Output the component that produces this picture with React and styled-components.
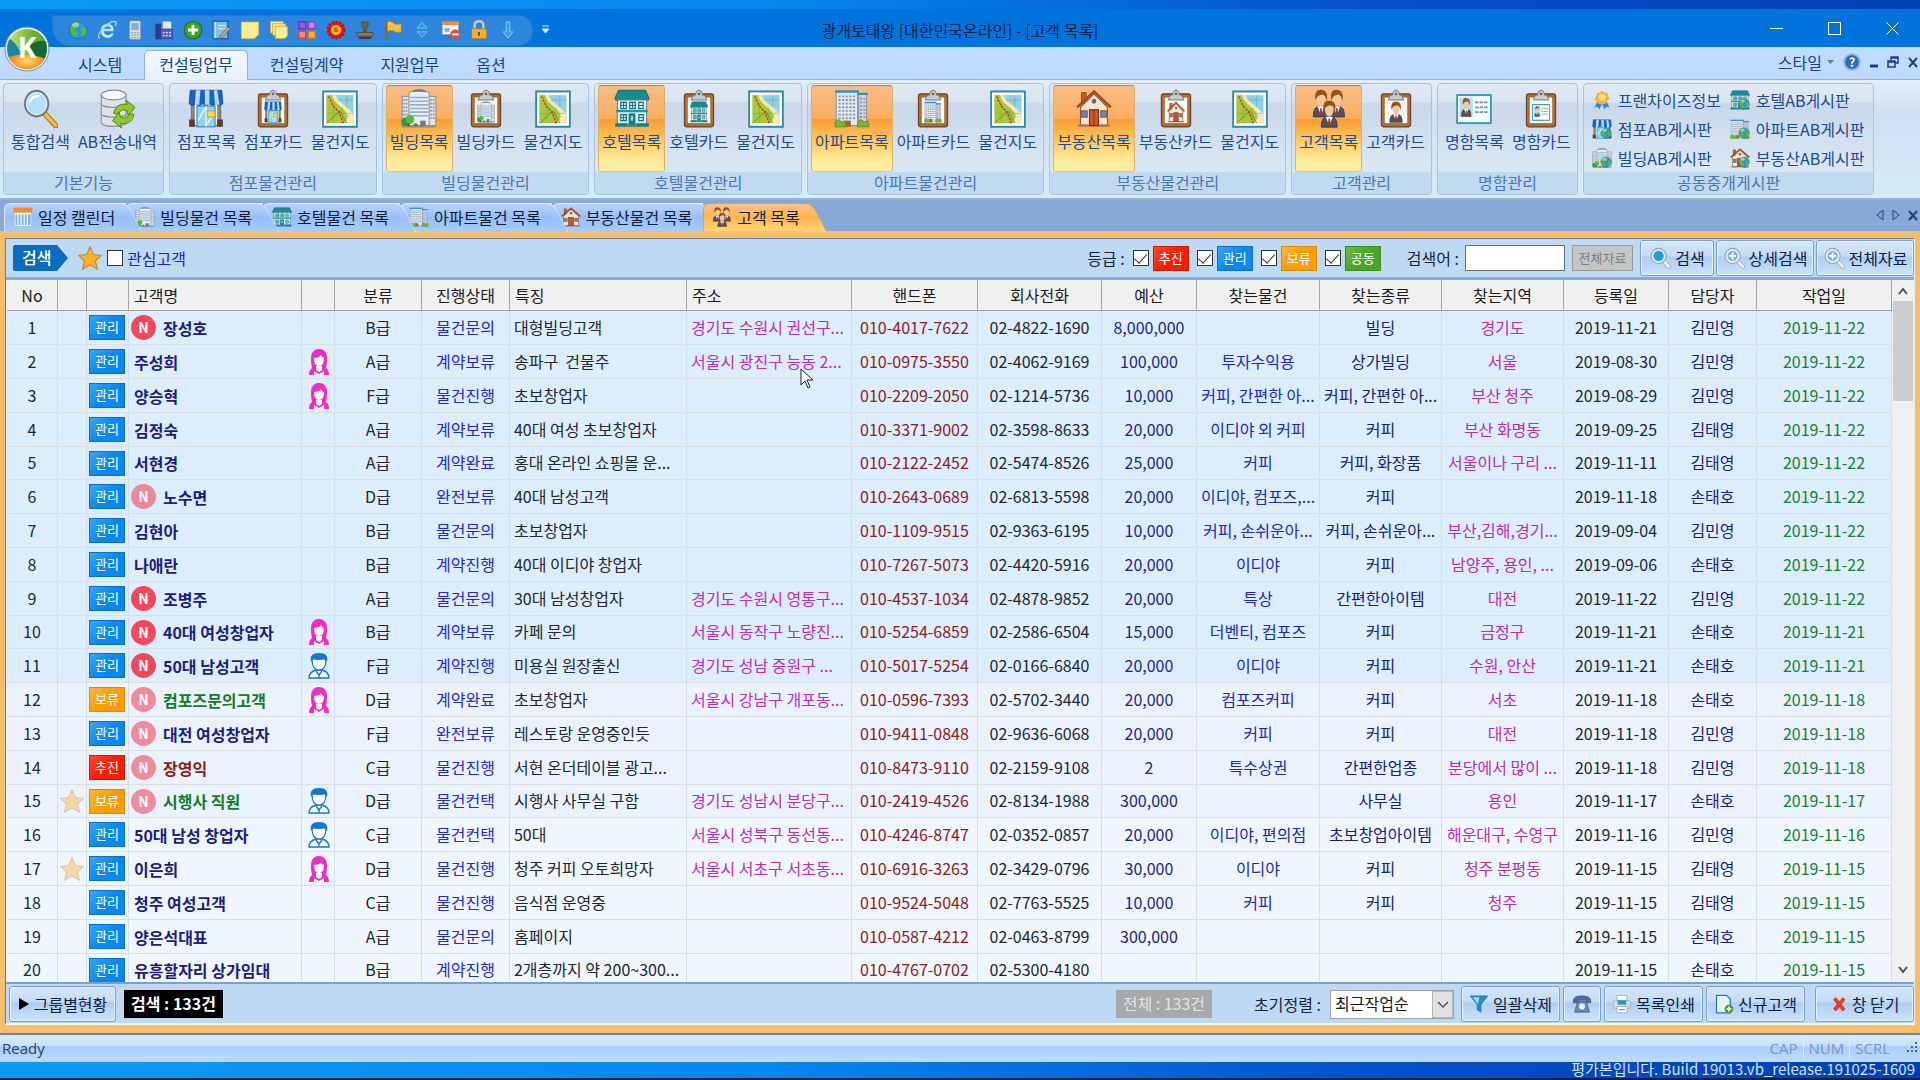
import React from "react";
import styled, { createGlobalStyle, css } from "styled-components";

const GlobalStyle = createGlobalStyle`
    * {
        box-sizing: border-box;
    }
    body {
        margin: 0;
        font-family: "Noto Sans CJK KR", "Noto Sans", sans-serif;
        font-size: 16px;
        line-height: 20px;
        color: #1a1a1a;
    }
    button, input, select {
        font: inherit;
        color: inherit;
        margin: 0;
        padding: 0;
    }
    svg {
        display: block;
        flex: none;
    }
`

const Desktop = styled.div`
    display: flex;
    flex-direction: column;
    height: 100vh;
    padding-top: 9px;
    background: linear-gradient(90deg, #0a9af5 0%, #0787ee 40%, #0350c8 72%, #0340b4 100%);
    overflow: hidden;
`

const AppWindow = styled.div`
    position: relative;
    display: flex;
    flex-direction: column;
    flex: 1;
    min-height: 0;
    background: #bfdbff;
`

/* ---------- title bar ---------- */

const TitleBar = styled.header`
    display: grid;
    grid-template-columns: 1fr auto 1fr;
    align-items: center;
    height: 38px;
    background: #0073dd;
`

const QuickBar = styled.div`
    display: flex;
    align-items: center;
    gap: 8px;
    margin: 4px 0 0 52px;
`

const QuickIcons = styled.div`
    display: flex;
    justify-content: space-between;
    align-items: center;
    width: 481px;
    height: 31px;
    padding: 0 14px 0 15px;
    background: #2e86dc;
    border: 1px solid #2478cc;
    border-radius: 2px 14px 14px 18px;
`

const PlainButton = styled.button`
    display: flex;
    align-items: center;
    justify-content: center;
    background: none;
    border: none;
    cursor: pointer;
`

const WindowTitle = styled.h1`
    margin: 4px 0 0;
    font-size: 16px;
    font-weight: 400;
    line-height: 20px;
    color: #07204a;
`

const WindowButtons = styled.div`
    display: flex;
    justify-content: flex-end;
    gap: 45px;
    margin-right: 21px;
`

const OrbButton = styled.button`
    position: absolute;
    left: 4px;
    top: 17px;
    z-index: 5;
    background: none;
    border: none;
    cursor: pointer;
`

/* ---------- ribbon ---------- */

const MenuRow = styled.nav`
    display: flex;
    justify-content: space-between;
    height: 33px;
    padding: 3px 1px 0 63px;
    background: #bfdbff;
    border-bottom: 1px solid #8db2e3;
`

const MenuTabs = styled.div`
    display: flex;
    gap: 7px;
`

const MenuTab = styled.button`
    height: 30px;
    padding: 0 14px 4px;
    color: #15428b;
    background: none;
    border: 1px solid transparent;
    border-bottom: none;
    border-radius: 5px 5px 0 0;
    cursor: pointer;
    ${p => p.$active && css`
        background: linear-gradient(#f4f9ff, #e6f0fb);
        border-color: #8db2e3;
    `}
`

const MenuRight = styled.div`
    display: flex;
    align-items: center;
    gap: 9px;
    height: 24px;
    color: #15428b;
`

const StyleButton = styled(PlainButton)`
    gap: 5px;
`

const Ribbon = styled.div`
    display: flex;
    gap: 5px;
    height: 120px;
    padding: 3px;
    background: linear-gradient(#e2edf9 0%, #cfe0f4 30%, #d6e8f6 80%, #cff0fb 100%);
    border-bottom: 2px solid #94b4dc;
`

const Group = styled.section`
    display: flex;
    flex-direction: column;
    border: 1px solid #a9c3e2;
    border-radius: 4px;
    background: linear-gradient(#e0e9f4 0%, #d9e4f1 16%, #c9d8ea 18%, #d9e7f5 78%);
    overflow: hidden;
`

const GroupBody = styled.div`
    display: flex;
    flex: 1;
    padding: 1px 2px 0 3px;
`

const GroupCaption = styled.h2`
    flex: none;
    margin: 0;
    height: 22px;
    font-size: 16px;
    font-weight: 400;
    line-height: 20px;
    text-align: center;
    color: #4a76b4;
    background: #c1d9f1;
`

const BigButton = styled.button`
    display: flex;
    flex-direction: column;
    align-items: center;
    gap: 3px;
    height: 87px;
    padding: 3px 3px 0;
    color: #1e4a90;
    background: none;
    border: 1px solid transparent;
    border-radius: 3px;
    white-space: nowrap;
    cursor: pointer;
    ${p => p.$active && css`
        background: linear-gradient(#f8bd86 0%, #fcae60 38%, #fb9a34 39%, #fdc45c 62%, #ffee9e 90%);
        border-color: #b08a58 #e0b060 #f0c860;
    `}
`

const LinkGrid = styled.div`
    display: grid;
    grid-template-columns: auto auto;
    grid-auto-rows: 29px;
    column-gap: 9px;
    padding: 0 7px 0 5px;
`

const SmallButton = styled.button`
    display: flex;
    align-items: center;
    gap: 6px;
    color: #1e4a90;
    background: none;
    border: none;
    white-space: nowrap;
    cursor: pointer;
`

/* ---------- document tabs ---------- */

const TabStrip = styled.div`
    display: flex;
    justify-content: space-between;
    height: 31px;
    padding: 3px 1px 0 4px;
    background: #88a9d6;
`

const Tabs = styled.div`
    display: flex;
`

const DocTab = styled.button`
    position: relative;
    z-index: ${p => p.$z};
    display: flex;
    align-items: center;
    gap: 5px;
    height: 28px;
    padding: 0 11px 2px 8px;
    color: #101c30;
    white-space: nowrap;
    background: ${p => p.$active ? "linear-gradient(#fdc08a, #ffb54c 50%, #ffd478)" : "linear-gradient(#b9d3fa, #98bff8 50%, #a4ccff)"};
    border: 1px solid ${p => p.$active ? "#d8a060" : "#dce9fb"};
    border-width: 1px 0 0 1px;
    border-radius: 6px 0 0 0;
    cursor: pointer;
    &::after {
        content: "";
        position: absolute;
        z-index: -1;
        top: -1px;
        right: -9px;
        width: 24px;
        height: 28px;
        background: inherit;
        border: 1px solid ${p => p.$active ? "#d8a060" : "#dce9fb"};
        border-width: 1px 1px 0 0;
        border-radius: 0 8px 0 0;
        transform: skewX(28deg);
    }
`

const TabTools = styled.div`
    display: flex;
    align-items: center;
    gap: 6px;
    height: 24px;
    color: #1c3f85;
`

/* ---------- customer list ---------- */

const Frame = styled.main`
    display: flex;
    flex-direction: column;
    flex: 1;
    min-height: 0;
    border: 5px solid #f5bd6c;
    border-width: 7px 5px 8px;
`

const Pane = styled.div`
    display: flex;
    flex-direction: column;
    flex: 1;
    min-height: 0;
    border: 1px solid #6e7c8c;
    border-bottom: 2px solid #f2f6fa;
    border-right-color: #e4ecf4;
    background: #bed9f3;
`

const SearchBar = styled.form`
    display: flex;
    justify-content: space-between;
    height: 41px;
    padding-left: 7px;
    border-bottom: 3px solid #86abd8;
`

const Cluster = styled.div`
    display: flex;
    align-items: center;
    gap: ${p => p.$gap}px;
    min-height: 36px;
`

const SearchTag = styled.span`
    width: 55px;
    height: 26px;
    padding-left: 9px;
    line-height: 24px;
    font-weight: 500;
    color: #ffffff;
    background: #0a6cc0;
    border-radius: 2px 0 0 2px;
    clip-path: polygon(0 0, 80% 0, 100% 50%, 80% 100%, 0 100%);
    margin-right: 5px;
`

const CheckLabel = styled.label`
    display: flex;
    align-items: center;
    gap: 4px;
    color: #2222c4;
    cursor: pointer;
`

const CheckBox = styled.input`
    appearance: none;
    display: flex;
    align-items: center;
    justify-content: center;
    width: 16px;
    height: 16px;
    background: #ffffff;
    border: 1px solid #333333;
    &:checked::after {
        content: "";
        width: 6px;
        height: 11px;
        margin-bottom: 3px;
        border: solid #333333;
        border-width: 0 1px 1px 0;
        transform: rotate(42deg);
    }
`

const gradeColors = {
    추진: ["#ff4a30", "#fb1c04", "#c81c08"],
    관리: ["#3ca4f6", "#0a88f0", "#0870c8"],
    보류: ["#ffb636", "#fb9c08", "#d88a10"],
    공동: ["#6cbc48", "#4aa42a", "#3c8c20"],
}

const Badge = styled.span`
    display: block;
    width: 36px;
    height: 25px;
    font-size: 13px;
    line-height: 22px;
    text-align: center;
    color: #ffffff;
    background: linear-gradient(135deg, ${p => gradeColors[p.$grade][0]}, ${p => gradeColors[p.$grade][1]} 50%);
    border: 1px solid ${p => gradeColors[p.$grade][2]};
`

const FieldLabel = styled.label`
    color: #16243c;
    white-space: nowrap;
`

const SearchInput = styled.input`
    width: 100px;
    height: 26px;
    margin: 0 7px 0 6px;
    padding: 0 4px;
    background: #ffffff;
    border: 1px solid #6a7078;
`

const MutedButton = styled.button`
    width: 61px;
    height: 26px;
    font-size: 13px;
    color: #7c7c7c;
    background: #c4c6c8;
    border: 1px solid #96989c;
    margin-right: 5px;
`

const ToolButton = styled.button`
    display: flex;
    align-items: center;
    justify-content: center;
    gap: 4px;
    min-width: ${p => p.$w}px;
    height: 36px;
    color: #10203c;
    white-space: nowrap;
    background: linear-gradient(#d4e6fa 0%, #c4dcf6 45%, #aecdf2 46%, #cbe3fc 100%);
    border: 1px solid #7c9fd0;
    border-radius: 3px;
    box-shadow: inset 0 0 0 1px #e2effd;
    cursor: pointer;
`

const SearchTools = styled(Cluster)`
    align-items: flex-start;
`

const TableArea = styled.div`
    display: flex;
    flex: 1;
    min-height: 0;
    padding-left: 1px;
    background: #e8f0f8;
    border-bottom: 2px solid #7f9fca;
`

const TableClip = styled.div`
    flex: 1;
    min-width: 0;
    overflow: hidden;
`

const Table = styled.table`
    width: 100%;
    table-layout: fixed;
    border-collapse: separate;
    border-spacing: 0;
`

const HeadCell = styled.th`
    height: 31px;
    padding: 0 5px;
    font-weight: 400;
    text-align: ${p => p.$left ? "left" : "center"};
    background: #f0f0f0;
    border-right: 1px solid #a4a4a4;
    border-bottom: 1px solid #a0a0a0;
`

const Row = styled.tr`
    height: 34px;
    background: ${p => p.$bg};
    &:nth-child(5n) {
        height: 33px;
    }
`

const Cell = styled.td`
    padding: ${p => p.$tight ? "0 0 0 2px" : "0 4px 2px"};
    color: ${p => p.$color || "#22262e"};
    font-weight: ${p => p.$bold ? 700 : 400};
    text-align: ${p => p.$left ? "left" : "center"};
    white-space: pre;
    overflow: hidden;
    border-right: 1px solid #d6dde6;
    border-bottom: 1px solid #dcdfe2;
`

const NameBox = styled.div`
    display: flex;
    align-items: center;
    gap: 7px;
    padding-left: ${p => p.$isNew ? 0 : 3}px;
`

const SexBox = styled.div`
    display: flex;
    justify-content: center;
`

const NewMark = styled.span`
    width: 25px;
    height: 25px;
    font-size: 14px;
    font-weight: 700;
    line-height: 24px;
    text-align: center;
    color: #ffffff;
    background: #f4475c;
    border-radius: 50%;
    opacity: ${p => p.$faded ? 0.6 : 1};
`

const FavoriteMark = styled.div`
    opacity: 0.4;
`

const ScrollBar = styled.div`
    display: flex;
    flex-direction: column;
    align-items: center;
    width: 22px;
    padding: 6px 1px 8px;
    background: #f0f0f0;
`

const ScrollThumb = styled.div`
    width: 100%;
    height: 100px;
    margin: 3px 0 auto;
    background: #cdcdcd;
`

const FooterBar = styled.footer`
    display: flex;
    align-items: center;
    justify-content: space-between;
    height: 39px;
    padding: 1px 0 0 3px;
`

const CountBox = styled.output`
    padding: 0 7px;
    height: 28px;
    line-height: 26px;
    font-weight: ${p => p.$muted ? 400 : 700};
    color: ${p => p.$muted ? "#e4e4e4" : "#ffffff"};
    background: ${p => p.$muted ? "#a6a8aa" : "#000000"};
    margin: 0 ${p => p.$muted ? 39 : 0}px 0 ${p => p.$muted ? 0 : 6}px;
    white-space: nowrap;
`

const SelectBox = styled.div`
    display: flex;
    align-items: center;
    position: relative;
    width: 124px;
    height: 29px;
    margin: 0 4px 0 6px;
    background: #ffffff;
    border: 1px solid #9aa4b0;
`

const SortSelect = styled.select`
    appearance: none;
    width: 100%;
    height: 100%;
    padding: 0 24px 2px 4px;
    background: none;
    border: none;
`

const SelectArrow = styled.span`
    position: absolute;
    right: 0;
    display: flex;
    align-items: center;
    justify-content: center;
    width: 21px;
    height: 27px;
    background: #e2e2e2;
    border: 1px solid #b4b8bc;
    pointer-events: none;
`

const CloseGap = styled.span`
    width: 4px;
`

const StatusBar = styled.div`
    display: flex;
    justify-content: space-between;
    align-items: center;
    height: 29px;
    padding: 0 2px 2px;
    font-family: "Open Sans", "Noto Sans CJK KR", sans-serif;
    font-size: 15px;
    color: #24406c;
    background: linear-gradient(#dcebfe 0%, #c6defd 40%, #a9cdfb 45%, #c0dcff 100%);
    border-top: 2px solid #6c84ac;
`

const StatusKeys = styled.div`
    display: flex;
    align-items: center;
    gap: 5px;
    color: #7896c4;
    span {
        padding-right: 5px;
        border-right: 1px solid #dcebfe;
    }
    span:nth-of-type(3) {
        border: none;
        padding-right: 11px;
    }
`

const BuildNote = styled.div`
    height: 18px;
    padding-right: 5px;
    font-size: 15px;
    line-height: 14px;
    text-align: right;
    color: #d4e0f4;
    border-bottom: 2px solid #04204c;
`

const Pointer = styled.svg`
    position: absolute;
    left: 800px;
    top: 359px;
    z-index: 9;
`

/* ---------- drawings, all on a 32 x 32 grid ---------- */

const Svg = ({ w = 20, h = w, children }) => (
    <svg width={w} height={h} viewBox="0 0 32 32" preserveAspectRatio="none" aria-hidden="true">{children}</svg>
)

const Store = () => (
    <g>
        <rect x="3" y="12" width="26" height="18" fill="#e8f2fa" stroke="#5a6a7a" />
        <rect x="3" y="12" width="3" height="19" fill="#8a8078" />
        <rect x="26" y="12" width="3" height="19" fill="#8a8078" />
        <rect x="8" y="14" width="16" height="17" fill="#8ad4f4" stroke="#3a8ac0" />
        <path d="M16 14v17M9 26l6-10M17 29l5-8" stroke="#ffffff" strokeWidth="1" />
        <rect x="17" y="18" width="7" height="5" fill="#ffd83a" stroke="#c89010" strokeWidth=".6" />
        <rect x="1" y="25" width="5" height="6" fill="#5a4028" />
        <rect x="26" y="25" width="5" height="6" fill="#5a4028" />
        <path d="M2 1h28l1 11q-3 3-6 0-3 3-6 0-3 3-6 0-3 3-6 0-3 3-6 0z" fill="#1a62c8" stroke="#0e4090" strokeWidth=".6" />
        <path d="M7 1h4l-1 12H6zM15 1h4v12h-4zM23 1h3l2 12h-4z" fill="#b4dcfa" />
    </g>
)

const Building = () => (
    <g>
        <path d="M1 6h30v24H1z" fill="#dfe3e7" stroke="#7c8690" strokeWidth=".8" />
        <path d="M2 9h4M2 12h4M2 15h4M2 18h4M2 21h4M26 9h4M26 12h4M26 15h4M26 18h4M26 21h4M26 24h4" stroke="#8a949e" strokeWidth="1.4" strokeDasharray="1.5 .7" />
        <path d="M7 4q0-2 3-2h12q3 0 3 2v26H7z" fill="#e6eef4" stroke="#7c8690" strokeWidth=".8" />
        <path d="M10 2q6-2 12 0" fill="none" stroke="#6c7680" strokeWidth="1.4" />
        <path d="M8 7h16M8 10h16M8 13h16M8 16h16M8 19h16M8 22h16" stroke="#8fb0c8" strokeWidth="1.3" />
        <rect x="17" y="26" width="5" height="5" fill="#6c7c8c" />
        <circle cx="4" cy="27" r="3.600" fill="#2f9a34" />
        <circle cx="8" cy="25" r="3.800" fill="#58b840" />
        <path d="M11 29q2-2 4 0v2h-4z" fill="#3c9c34" />
        <rect x="6" y="28" width="1.600" height="3" fill="#7a4a20" />
        <path d="M1 31h30" stroke="#888" />
    </g>
)

const Hotel = () => (
    <g>
        <path d="M4 1h24l3 6v2H1V7z" fill="#168c94" stroke="#0a6068" strokeWidth=".7" />
        <rect x="3" y="9" width="26" height="20" fill="#dfecf0" stroke="#6a8890" />
        <path d="M6 11h5v5H6zM14 11h5v5h-5zM22 11h4v5h-4zM6 21h5v5H6zM22 21h4v5h-4z" fill="#c8f0f2" stroke="#0e7078" />
        <path d="M8.500 11v5M16.500 11v5M8.500 21v5M6 13.500h5M14 13.500h5M22 13.500h4M6 23.500h5M22 23.500h4" stroke="#0e7078" strokeWidth=".8" />
        <path d="M2 17h28v2H2z" fill="#1c98a0" />
        <rect x="13" y="20" width="6" height="10" fill="#1a7c84" />
        <rect x="15" y="22" width="2" height="4" fill="#8cdce0" />
        <path d="M1 28h11v3H1zM20 28h11v3H20zM10 30h12v1H10z" fill="#148088" />
    </g>
)

const Apartment = () => (
    <g>
        <path d="M2 2h19v28H2z" fill="#e2e8f0" stroke="#8090a4" strokeWidth=".8" />
        <path d="M22 4h7v26h-7z" fill="#d0d8e4" stroke="#8090a4" strokeWidth=".8" />
        <path d="M1 1h21v2H1zM21 3h9v2h-9z" fill="#2e90cc" />
        <path d="M4 6h16M4 9h16M4 12h16M4 15h16M4 18h16M4 21h16M4 24h16M23 8h5M23 11h5M23 14h5M23 17h5M23 20h5M23 23h5" stroke="#8c9cb4" strokeWidth="1.5" strokeDasharray="2 1.2" />
        <rect x="10" y="26" width="5" height="5" fill="#a8622c" />
        <path d="M1 31v-4l3-2 3 2 3-1 1 5zM21 31v-4l3-2 3 2 3-1 1 5z" fill="#7cb434" stroke="#3c8414" strokeWidth=".6" />
    </g>
)

const House = () => (
    <g>
        <rect x="5" y="3" width="4" height="9" fill="#c85a2c" stroke="#84340e" strokeWidth=".7" />
        <path d="M4 15L16 4l12 11v15H4z" fill="#f2e6d0" stroke="#8a5a34" />
        <path d="M1 15L16 2l15 13" fill="none" stroke="#a84a20" strokeWidth="2.2" />
        <circle cx="16" cy="10" r="2" fill="#5a6a8a" />
        <rect x="12" y="17" width="8" height="13" fill="#d0582a" stroke="#843010" />
        <path d="M16 17v13" stroke="#843010" strokeWidth=".8" />
        <path d="M5 18h5v5H5zM22 18h5v5h-5z" fill="#5a8ad4" stroke="#8a5a34" />
        <path d="M2 29h9v2H2zM21 29h9v2h-9z" fill="#a87850" />
    </g>
)

const Person = () => (
    <g>
        <path d="M5 31c0-9 3-12 11-12s11 3 11 12z" fill="#4c5460" stroke="#2c323c" />
        <path d="M11 19l5 10 5-10z" fill="#ffffff" />
        <path d="M15 21h2l1 7-2 2-2-2z" fill="#c42828" />
        <ellipse cx="16" cy="11" rx="6" ry="8" fill="#f4c898" />
        <path d="M8 13C6 2 12 0 17 1c7 0 9 6 7 12-1-5-3-6-6-7-4 1-8 1-10 7z" fill="#8c5420" />
    </g>
)

const People = () => (
    <g>
        <g transform="translate(-1 0) scale(.62 .74)"><Person /></g>
        <g transform="translate(13 0) scale(.62 .74)"><Person /></g>
        <g transform="translate(6 9) scale(.64 .72)"><Person /></g>
    </g>
)

const NameCard = () => (
    <g>
        <rect x="1" y="5" width="30" height="23" fill="#f4fbff" stroke="#3a94bc" strokeWidth="1.6" />
        <rect x="3" y="7" width="12" height="16" fill="#b4e0f4" />
        <g transform="translate(3 7) scale(.38 .5)"><Person /></g>
        <path d="M17 11h11M17 15h11M17 19h11" stroke="#7890a0" strokeWidth="1.4" strokeDasharray="3 1" />
    </g>
)

const MapSheet = () => (
    <g>
        <rect x="1" y="2" width="30" height="29" fill="#ffffff" stroke="#2a88a8" strokeWidth="1.6" />
        <rect x="4" y="5" width="24" height="23" fill="#8cd0f4" />
        <path d="M4 5h8c3 8 13 9 16 17v6H4z" fill="#f6e8b4" />
        <path d="M4 5h5c2 9 13 10 14 18l-3 5H4z" fill="#a8c83c" />
        <path d="M22 5v10M14 9h14M10 12v16M4 20h22M18 15v13" stroke="#80a860" strokeWidth=".5" />
        <path d="M4 28l12-10 6 10" fill="none" stroke="#6c9030" strokeWidth=".8" />
        <path d="M6 6l4 8 5 5 4 9" fill="none" stroke="#d03018" strokeWidth="1.2" strokeDasharray="2 1" />
    </g>
)

const Magnifier = () => (
    <g>
        <path d="M20 20l10 10" stroke="#b8761c" strokeWidth="5" strokeLinecap="round" />
        <path d="M21 21l9 9" stroke="#f8b848" strokeWidth="3" strokeLinecap="round" />
        <circle cx="13" cy="12" r="10" fill="#b4e0fc" stroke="#6a7c8c" strokeWidth="2.6" />
        <circle cx="13" cy="12" r="9" fill="none" stroke="#f0f4f8" strokeWidth="1" />
        <path d="M7 11q2-6 8-5" fill="none" stroke="#fff" strokeWidth="2" />
    </g>
)

const Database = () => (
    <g>
        <path d="M2 5v22c0 5 22 5 22 0V5z" fill="#dfe3e7" stroke="#8a9098" />
        <path d="M2 12c0 4 22 4 22 0M2 20c0 4 22 4 22 0" fill="none" stroke="#8a9098" />
        <ellipse cx="13" cy="5" rx="11" ry="4" fill="#f6f8fa" stroke="#8a9098" />
        <path d="M13 20c1-6 7-9 12-7l-1-4 8 6-6 7-1-4c-4-2-7 0-8 3z" fill="#92c42c" stroke="#4c8410" strokeWidth=".8" />
        <path d="M31 21c-1 6-7 9-12 7l1 4-8-6 6-7 1 4c4 2 7 0 8-3z" fill="#92c42c" stroke="#4c8410" strokeWidth=".8" />
    </g>
)

const Clipboard = ({ children }) => (
    <g>
        <rect x="3" y="4" width="26" height="27" rx="2" fill="#a86c34" stroke="#6c4018" />
        <rect x="6" y="7" width="20" height="21" fill="#f6f6f4" />
        <g transform="translate(8 10) scale(.5 .56)">{children}</g>
        <path d="M9 9l2-4h2q0-4 3-4t3 4h2l2 4z" fill="#c8ccd0" stroke="#74787c" strokeWidth=".8" />
        <circle cx="16" cy="4" r="1.2" fill="#6c7074" />
    </g>
)

const Globe = () => (
    <g>
        <circle cx="16" cy="16" r="14" fill="#2c94e8" stroke="#1464ac" />
        <path d="M5 9q5-8 12-6 3 4-1 7-6 0-5 5 5 2 4 8l-3 5Q4 24 3 15zM21 12q7-2 9 4-1 8-7 11-4-5-2-15z" fill="#58b83c" />
        <ellipse cx="12" cy="8" rx="6" ry="4" fill="#fff" opacity=".4" />
    </g>
)

const WithGlobe = ({ children }) => (
    <g>
        {children}
        <g transform="translate(13 13) scale(.6)"><Globe /></g>
    </g>
)

const Medal = () => (
    <g>
        <path d="M9 18L4 28l5-1 3 4 5-11zM23 18l5 10-5-1-3 4-5-11z" fill="#3c84d0" />
        <path d="M16 1l4 3 5 1 1 5 2 4-4 4-2 4-6 1-6-1-3-4-3-4 3-4 1-5 5-1z" fill="#f8b030" />
        <circle cx="16" cy="12" r="6" fill="#ffd878" />
    </g>
)

const Calendar = () => (
    <g>
        <rect x="2" y="2" width="28" height="29" fill="#f4f8fc" stroke="#98acc4" />
        <path d="M1 1h30v8H1z" fill="#f48c28" />
        <path d="M4 12h24v17H4z" fill="#7cb4e4" />
        <path d="M8 11v19M13 11v19M18 11v19M23 11v19" stroke="#f4f8fc" strokeWidth="2" />
    </g>
)

const Star = () => (
    <path d="M16 1l4.500 10.500L31 12.500l-8 7.500 3 11-10-6-10 6 3-11-8-7.500 10.500-1z" fill="#fdb022" stroke="#b88830" strokeWidth="1.400" />
)

const Loupe = ({ plus }) => (
    <g>
        <path d="M20 19l9 10" stroke="#a0a8b0" strokeWidth="6" strokeLinecap="round" />
        <path d="M21 20l8 9" stroke="#eef0f2" strokeWidth="4" strokeLinecap="round" />
        <circle cx="14" cy="13" r="11" fill="#e4eef6" stroke="#98a4b0" strokeWidth="1.6" />
        <circle cx="14" cy="13" r="7.500" fill={plus ? "#7cb8d0" : "#18a0e0"} />
        {plus && <path d="M14 8v10M9 13h10" stroke="#fff" strokeWidth="2.600" />}
    </g>
)

const Orb = () => (
    <svg width="46" height="46" viewBox="0 0 46 46" role="img" aria-label="K">
        <defs>
            <clipPath id="orb"><circle cx="23" cy="23" r="20" /></clipPath>
            <radialGradient id="orbFire" cx=".5" cy=".3" r=".7">
                <stop offset="0" stopColor="#ffe060" />
                <stop offset=".6" stopColor="#f8801c" />
                <stop offset="1" stopColor="#d83c0c" />
            </radialGradient>
            <linearGradient id="orbGreen">
                <stop offset="0" stopColor="#e4ec8c" />
                <stop offset=".6" stopColor="#6cb430" />
                <stop offset="1" stopColor="#4ca02c" />
            </linearGradient>
        </defs>
        <circle cx="23" cy="23" r="22" fill="#e8ecf0" stroke="#7c8ca0" />
        <g clipPath="url(#orb)">
            <rect width="46" height="46" fill="url(#orbGreen)" />
            <path d="M0 10q12 4 17 18L2 38z" fill="#1c84a4" />
            <path d="M24 22q8-10 22-6v18H26z" fill="#146c34" />
            <path d="M2 32q20-8 42 2v16H2z" fill="url(#orbFire)" />
        </g>
        <text x="23" y="32" textAnchor="middle" fontFamily="Open Sans, sans-serif" fontSize="28" fontWeight="700" fill="#ffffff">K</text>
    </svg>
)

const quickIcons = [
    ["웹", <Globe />],
    ["인터넷", (
        <g>
            <path d="M27 18H11q1 6 6 6 4 0 6-3h4q-3 8-10 8Q6 28 6 17T17 6q10 0 10 12zm-5-4q-1-4-5-4t-6 4z" fill="#c8ecff" stroke="#3a9ce0" strokeWidth=".8" />
            <path d="M4 30Q-1 26 10 13 24-1 30 3q2 2-1 7" fill="none" stroke="#9cd8fc" strokeWidth="2" />
        </g>
    )],
    ["휴대폰", (
        <g>
            <rect x="7" y="1" width="18" height="30" rx="3" fill="#d8dce0" stroke="#7c8894" />
            <rect x="10" y="5" width="12" height="11" fill="#7cb4dc" />
            <path d="M10 20h12M10 24h12M10 28h12" stroke="#98a0a8" strokeWidth="2" strokeDasharray="3 1.500" />
        </g>
    )],
    ["팩스", (
        <g>
            <rect x="2" y="6" width="9" height="25" fill="#2c3890" />
            <rect x="11" y="15" width="19" height="15" fill="#5464b4" stroke="#2c3880" />
            <rect x="14" y="2" width="14" height="12" fill="#dce8f8" stroke="#7088b8" />
            <path d="M14 20h13M14 25h13" stroke="#d4dcf4" strokeWidth="2" strokeDasharray="3 2" />
        </g>
    )],
    ["추가", (
        <g>
            <circle cx="16" cy="16" r="14" fill="#3fa428" stroke="#237414" strokeWidth="2" />
            <path d="M16 8v16M8 16h16" stroke="#fff" strokeWidth="4.500" />
        </g>
    )],
    ["메모 작성", (
        <g>
            <rect x="3" y="2" width="24" height="28" fill="#7cc0f0" stroke="#1c5ca4" strokeWidth="2" />
            <path d="M7 3v26M11 9h12M11 14h12" stroke="#e8f4fc" strokeWidth="1.500" />
            <path d="M14 26l13-15 4 3-13 14-5 2z" fill="#c8a878" stroke="#5c4838" />
        </g>
    )],
    ["메모", <path d="M2 3h28v20l-7 7H2z" fill="#fcec90" stroke="#c4a840" />],
    ["메모 목록", (
        <g fill="#fcec90" stroke="#a88c38">
            <path d="M2 2h21v19H2z" />
            <path d="M6 6h21v19H6z" />
            <path d="M10 10h20v15l-5 5H10z" />
        </g>
    )],
    ["분류", (
        <g strokeWidth="2">
            <rect x="3" y="3" width="11" height="11" fill="#9c54e8" stroke="#6c2cc0" />
            <rect x="18" y="3" width="11" height="11" fill="#c880f4" stroke="#8838c8" />
            <rect x="3" y="18" width="11" height="11" fill="#fc8c74" stroke="#e83c30" />
            <rect x="18" y="18" width="11" height="11" fill="#fcb030" stroke="#f07018" />
        </g>
    )],
    ["설정", (
        <g>
            <circle cx="16" cy="16" r="13" fill="#e81c14" stroke="#c80c0c" strokeWidth="4" strokeDasharray="4 2" />
            <circle cx="16" cy="16" r="8" fill="#fcc424" />
            <circle cx="16" cy="16" r="4" fill="#f05c14" />
        </g>
    )],
    ["도장", (
        <g>
            <path d="M11 3h10v6l-3 5v5h-4v-5l-3-5z" fill="#6c6054" stroke="#40382c" />
            <path d="M3 20h26v6H3z" fill="#9c7450" stroke="#4c3420" />
            <path d="M6 27h20v3H6z" fill="#3c3028" />
        </g>
    )],
    ["깃발", (
        <g>
            <path d="M6 2v29" stroke="#8c6414" strokeWidth="3" />
            <path d="M7 3q6-2 10 2t12 1v13q-7 2-11-1t-11 0z" fill="#fcc040" stroke="#c88010" />
        </g>
    )],
    ["정렬", <path d="M8 13l8-9 8 9zM8 19l8 9 8-9z" fill="#3c90dc" stroke="#80c0f0" strokeWidth="1.500" />],
    ["창 제거", (
        <g>
            <rect x="2" y="3" width="26" height="20" fill="#f4f4f4" stroke="#98a0ac" />
            <path d="M2 3h26v5H2z" fill="#f08c38" />
            <path d="M6 13h8v6H6z" fill="#78b4e8" />
            <circle cx="23" cy="23" r="8" fill="#e84c34" />
            <path d="M18 23h10" stroke="#fff" strokeWidth="3" />
        </g>
    )],
    ["잠금", (
        <g>
            <path d="M9 15V9q0-7 7-7t7 7v6" fill="none" stroke="#c0c8d0" strokeWidth="4" />
            <rect x="4" y="14" width="24" height="16" rx="2" fill="#f4b030" stroke="#a87010" />
            <path d="M16 19v6" stroke="#704808" strokeWidth="3" />
        </g>
    )],
    ["내리기", <path d="M13 3h6v16h5l-8 10-8-10h5z" fill="#3c9ce8" stroke="#8cc8f4" strokeWidth="1.500" />],
]

/* ---------- data ---------- */

const ribbonGroups = [
    ["기본기능", [["통합검색", <Magnifier />], ["AB전송내역", <Database />]]],
    ["점포물건관리", [["점포목록", <Store />], ["점포카드", <Clipboard><Store /></Clipboard>], ["물건지도", <MapSheet />]]],
    ["빌딩물건관리", [["빌딩목록", <Building />, true], ["빌딩카드", <Clipboard><Building /></Clipboard>], ["물건지도", <MapSheet />]]],
    ["호텔물건관리", [["호텔목록", <Hotel />, true], ["호텔카드", <Clipboard><Hotel /></Clipboard>], ["물건지도", <MapSheet />]]],
    ["아파트물건관리", [["아파트목록", <Apartment />, true], ["아파트카드", <Clipboard><Apartment /></Clipboard>], ["물건지도", <MapSheet />]]],
    ["부동산물건관리", [["부동산목록", <House />, true], ["부동산카드", <Clipboard><House /></Clipboard>], ["물건지도", <MapSheet />]]],
    ["고객관리", [["고객목록", <People />, true], ["고객카드", <Clipboard><Person /></Clipboard>]]],
    ["명함관리", [["명함목록", <NameCard />], ["명함카드", <Clipboard><NameCard /></Clipboard>]]],
]

const boardLinks = [
    ["프랜차이즈정보", <Medal />],
    ["호텔AB게시판", <WithGlobe><Hotel /></WithGlobe>],
    ["점포AB게시판", <WithGlobe><Store /></WithGlobe>],
    ["아파트AB게시판", <WithGlobe><Apartment /></WithGlobe>],
    ["빌딩AB게시판", <WithGlobe><Building /></WithGlobe>],
    ["부동산AB게시판", <WithGlobe><House /></WithGlobe>],
]

const docTabs = [
    ["일정 캘린더", <Calendar />],
    ["빌딩물건 목록", <Building />],
    ["호텔물건 목록", <Hotel />],
    ["아파트물건 목록", <Apartment />],
    ["부동산물건 목록", <House />],
    ["고객 목록", <People />],
]

const columns = [
    ["No", 51], ["", 29], ["", 42], ["고객명", 173, true], ["", 33], ["분류", 87], ["진행상태", 88],
    ["특징", 177, true], ["주소", 165, true], ["핸드폰", 126], ["회사전화", 124], ["예산", 95],
    ["찾는물건", 123], ["찾는종류", 122], ["찾는지역", 122], ["등록일", 105], ["담당자", 88], ["작업일", 135],
]

// star, grade, new mark (2 = fresh, 1 = old), name, sex, class, state, note, address, mobile, office, budget, item, kind, area, added, staff, worked
const customers = [
    [0, "관리", 2, "장성호", "", "B급", "물건문의", "대형빌딩고객", "경기도 수원시 권선구...", "010-4017-7622", "02-4822-1690", "8,000,000", "", "빌딩", "경기도", "2019-11-21", "김민영", "2019-11-22"],
    [0, "관리", 0, "주성희", "f", "A급", "계약보류", "송파구  건물주", "서울시 광진구 능동 2...", "010-0975-3550", "02-4062-9169", "100,000", "투자수익용", "상가빌딩", "서울", "2019-08-30", "김민영", "2019-11-22"],
    [0, "관리", 0, "양승혁", "f", "F급", "물건진행", "초보창업자", "", "010-2209-2050", "02-1214-5736", "10,000", "커피, 간편한 아...", "커피, 간편한 아...", "부산 청주", "2019-08-29", "김민영", "2019-11-22"],
    [0, "관리", 0, "김정숙", "", "A급", "계약보류", "40대 여성 초보창업자", "", "010-3371-9002", "02-3598-8633", "20,000", "이디야 외 커피", "커피", "부산 화명동", "2019-09-25", "김태영", "2019-11-22"],
    [0, "관리", 0, "서현경", "", "A급", "계약완료", "홍대 온라인 쇼핑몰 운...", "", "010-2122-2452", "02-5474-8526", "25,000", "커피", "커피, 화장품", "서울이나 구리 ...", "2019-11-11", "김태영", "2019-11-22"],
    [0, "관리", 1, "노수면", "", "D급", "완전보류", "40대 남성고객", "", "010-2643-0689", "02-6813-5598", "20,000", "이디야, 컴포즈,...", "커피", "", "2019-11-18", "손태호", "2019-11-22"],
    [0, "관리", 0, "김현아", "", "B급", "물건문의", "초보창업자", "", "010-1109-9515", "02-9363-6195", "10,000", "커피, 손쉬운아...", "커피, 손쉬운아...", "부산,김해,경기...", "2019-09-04", "김민영", "2019-11-22"],
    [0, "관리", 0, "나애란", "", "B급", "계약진행", "40대 이디야 창업자", "", "010-7267-5073", "02-4420-5916", "20,000", "이디야", "커피", "남양주, 용인, ...", "2019-09-06", "손태호", "2019-11-22"],
    [0, "관리", 2, "조병주", "", "A급", "물건문의", "30대 남성창업자", "경기도 수원시 영통구...", "010-4537-1034", "02-4878-9852", "20,000", "특상", "간편한아이템", "대전", "2019-11-22", "김민영", "2019-11-22"],
    [0, "관리", 2, "40대 여성창업자", "f", "B급", "계약보류", "카페 문의", "서울시 동작구 노량진...", "010-5254-6859", "02-2586-6504", "15,000", "더벤티, 컴포즈", "커피", "금정구", "2019-11-21", "손태호", "2019-11-21"],
    [0, "관리", 2, "50대 남성고객", "m", "F급", "계약진행", "미용실 원장출신", "경기도 성남 중원구 ...", "010-5017-5254", "02-0166-6840", "20,000", "이디야", "커피", "수원, 안산", "2019-11-21", "손태호", "2019-11-21"],
    [0, "보류", 1, "컴포즈문의고객", "f", "D급", "계약완료", "초보창업자", "서울시 강남구 개포동...", "010-0596-7393", "02-5702-3440", "20,000", "컴포즈커피", "커피", "서초", "2019-11-18", "손태호", "2019-11-18"],
    [0, "관리", 1, "대전 여성창업자", "", "F급", "완전보류", "레스토랑 운영중인듯", "", "010-9411-0848", "02-9636-6068", "20,000", "커피", "커피", "대전", "2019-11-18", "김민영", "2019-11-18"],
    [0, "추진", 1, "장영익", "", "C급", "물건진행", "서현 온더테이블 광고...", "", "010-8473-9110", "02-2159-9108", "2", "특수상권", "간편한업종", "분당에서 많이 ...", "2019-11-18", "김민영", "2019-11-18"],
    [1, "보류", 1, "시행사 직원", "m", "D급", "물건컨택", "시행사 사무실 구함", "경기도 성남시 분당구...", "010-2419-4526", "02-8134-1988", "300,000", "", "사무실", "용인", "2019-11-17", "손태호", "2019-11-17"],
    [0, "관리", 0, "50대 남성 창업자", "m", "C급", "물건컨택", "50대", "서울시 성북구 동선동...", "010-4246-8747", "02-0352-0857", "20,000", "이디야, 편의점", "초보창업아이템", "해운대구, 수영구", "2019-11-16", "김민영", "2019-11-16"],
    [1, "관리", 0, "이은희", "f", "D급", "물건진행", "청주 커피 오토희망자", "서울시 서초구 서초동...", "010-6916-3263", "02-3429-0796", "30,000", "이디야", "커피", "청주 분평동", "2019-11-15", "김태영", "2019-11-15"],
    [0, "관리", 0, "청주 여성고객", "", "C급", "물건진행", "음식점 운영중", "", "010-9524-5048", "02-7763-5525", "10,000", "커피", "커피", "청주", "2019-11-15", "김태영", "2019-11-15"],
    [0, "관리", 0, "양은석대표", "", "A급", "물건문의", "홈페이지", "", "010-0587-4212", "02-0463-8799", "300,000", "", "", "", "2019-11-15", "손태호", "2019-11-15"],
    [0, "관리", 0, "유흥할자리 상가임대", "", "B급", "계약진행", "2개층까지 약 200~300...", "", "010-4767-0702", "02-5300-4180", "", "", "", "", "2019-11-15", "손태호", "2019-11-15"],
]

const nameColors = { 관리: "#1c1c84", 보류: "#147c24", 추진: "#8c1c1c" }
const fieldColors = ["#22262e", "#2828d0", "#22262e", "#bc2cc0", "#8c2020", "#22262e", "#1c2490", "#1c28c0", "#18207c", "#b82cb8", "#22262e", "#18207c", "#188030"]

const rowColor = i => i < 11 ? "#dcedfd" : i < 15 ? "#eaf3fd" : "#eff6fd"

/* ---------- parts ---------- */

function SexIcon({ sex }) {
    if (sex === "f") {
        return (
            <svg width="22" height="26" viewBox="0 0 22 26" role="img" aria-label="여성">
                <path d="M1 26q0-5 3-7Q0 0 11 0t7 19q3 2 3 7z" fill="#f02cc4" />
                <path d="M6 9q5 0 7-3 1 3 3 3 0 8-5 8T6 9z" fill="#fff" />
                <path d="M8 17h6v4l-3 2-3-2zM6 22l5 3 5-3v4H6z" fill="#fff" />
            </svg>
        )
    }
    return (
        <svg width="22" height="26" viewBox="0 0 22 26" role="img" aria-label="남성">
            <path d="M1 25q0-6 7-8h6q7 2 7 8z" fill="#fff" stroke="#1474dc" strokeWidth="1.4" />
            <path d="M4 6h14q0 11-7 11T4 6z" fill="#fff" stroke="#1474dc" strokeWidth="1.2" />
            <path d="M3 9q-2-9 8-9t8 9q-1-2-3-3-5 2-10 0-2 1-3 3z" fill="#1474dc" />
            <path d="M8 18l3 4 3-4M11 21v4" fill="none" stroke="#1474dc" strokeWidth="1.4" />
        </svg>
    )
}

function TopArea() {
    return (
        <>
            <TitleBar>
                <QuickBar>
                    <QuickIcons>
                        {quickIcons.map(([name, icon]) => (
                            <PlainButton key={name} aria-label={name}><Svg w={20} h={20}>{icon}</Svg></PlainButton>
                        ))}
                    </QuickIcons>
                    <PlainButton aria-label="도구 모음 설정">
                        <svg width="9" height="10" viewBox="0 0 9 10"><path d="M1 1h7M1 4h7L4.500 8z" stroke="#d4e8fc" fill="#d4e8fc" /></svg>
                    </PlainButton>
                </QuickBar>
                <WindowTitle>광개토태왕 [대한민국온라인] - [고객 목록]</WindowTitle>
                <WindowButtons>
                    <PlainButton aria-label="최소화"><svg width="13" height="13"><path d="M0 6.500h13" stroke="#fff" /></svg></PlainButton>
                    <PlainButton aria-label="최대화"><svg width="13" height="13"><rect x=".5" y=".5" width="12" height="12" fill="none" stroke="#fff" /></svg></PlainButton>
                    <PlainButton aria-label="닫기"><svg width="13" height="13"><path d="M.5.5l12 12M12.500.5l-12 12" stroke="#fff" /></svg></PlainButton>
                </WindowButtons>
            </TitleBar>
            <OrbButton aria-label="시작 메뉴"><Orb /></OrbButton>
            <MenuRow>
                <MenuTabs>
                    {["시스템", "컨설팅업무", "컨설팅계약", "지원업무", "옵션"].map((t, i) => (
                        <MenuTab key={t} $active={i === 1}>{t}</MenuTab>
                    ))}
                </MenuTabs>
                <MenuRight>
                    <StyleButton>스타일 <svg width="7" height="5"><path d="M0 0h7L3.500 4z" fill="#5c7cb0" /></svg></StyleButton>
                    <PlainButton aria-label="도움말">
                        <svg width="18" height="18" viewBox="0 0 18 18">
                            <circle cx="9" cy="9" r="8" fill="#2c70c4" stroke="#9cb8dc" strokeWidth="2" />
                            <text x="9" y="13.500" textAnchor="middle" fontSize="12" fontWeight="700" fill="#fff">?</text>
                        </svg>
                    </PlainButton>
                    <PlainButton aria-label="문서 최소화"><svg width="8" height="12"><path d="M0 10h8" stroke="#1c3f85" strokeWidth="3" /></svg></PlainButton>
                    <PlainButton aria-label="문서 복원">
                        <svg width="12" height="12" fill="none" stroke="#1c3f85" strokeWidth="1.500"><path d="M4 4V1h7v6H8M3.500 2h8" /><path d="M1 5h7v6H1zM1 6h7" /></svg>
                    </PlainButton>
                    <PlainButton aria-label="문서 닫기"><svg width="11" height="11"><path d="M1 1l8 9M9 1l-8 9" stroke="#1c3f85" strokeWidth="2" /></svg></PlainButton>
                </MenuRight>
            </MenuRow>
            <Ribbon>
                {ribbonGroups.map(([caption, items]) => (
                    <Group key={caption}>
                        <GroupBody>
                            {items.map(([label, icon, active]) => (
                                <BigButton key={label} $active={active}>
                                    <Svg w={36} h={39}>{icon}</Svg>
                                    {label}
                                </BigButton>
                            ))}
                        </GroupBody>
                        <GroupCaption>{caption}</GroupCaption>
                    </Group>
                ))}
                <Group>
                    <GroupBody>
                        <LinkGrid>
                            {boardLinks.map(([label, icon]) => (
                                <SmallButton key={label}><Svg w={20}>{icon}</Svg>{label}</SmallButton>
                            ))}
                        </LinkGrid>
                    </GroupBody>
                    <GroupCaption>공동중개게시판</GroupCaption>
                </Group>
            </Ribbon>
            <TabStrip>
                <Tabs>
                    {docTabs.map(([label, icon], i) => (
                        <DocTab key={label} $z={i === 5 ? 10 : 8 - i} $active={i === 5}><Svg w={20}>{icon}</Svg>{label}</DocTab>
                    ))}
                </Tabs>
                <TabTools>
                    <PlainButton aria-label="이전 탭"><svg width="10" height="12"><path d="M8 1v10L2 6z" fill="none" stroke="#1c3f85" /></svg></PlainButton>
                    <PlainButton aria-label="다음 탭"><svg width="10" height="12"><path d="M2 1v10l6-5z" fill="none" stroke="#1c3f85" /></svg></PlainButton>
                    <PlainButton aria-label="탭 닫기"><svg width="12" height="12"><path d="M2 2l8 9M10 2l-8 9" stroke="#1c3f85" strokeWidth="2" /></svg></PlainButton>
                </TabTools>
            </TabStrip>
        </>
    )
}

function SearchPanel() {
    return (
        <SearchBar onSubmit={e => e.preventDefault()}>
            <Cluster $gap={5}>
                <SearchTag>검색</SearchTag>
                <Svg w={24}><Star /></Svg>
                <CheckLabel><CheckBox type="checkbox" />관심고객</CheckLabel>
            </Cluster>
            <Cluster $gap={26}>
                <Cluster $gap={8}>
                    <FieldLabel as="span">등급 :</FieldLabel>
                    {Object.keys(gradeColors).map(g => (
                        <CheckLabel key={g}>
                            <CheckBox type="checkbox" defaultChecked />
                            <Badge $grade={g}>{g}</Badge>
                        </CheckLabel>
                    ))}
                </Cluster>
                <SearchTools $gap={2}>
                    <Cluster $gap={0}>
                        <FieldLabel htmlFor="keyword">검색어 :</FieldLabel>
                        <SearchInput id="keyword" type="text" />
                        <MutedButton type="button" disabled>전체자료</MutedButton>
                    </Cluster>
                    <ToolButton type="submit" $w={74}><Svg w={22}><Loupe /></Svg>검색</ToolButton>
                    <ToolButton type="button" $w={98}><Svg w={22}><Loupe plus /></Svg>상세검색</ToolButton>
                    <ToolButton type="button" $w={98}><Svg w={22}><Loupe plus /></Svg>전체자료</ToolButton>
                </SearchTools>
            </Cluster>
        </SearchBar>
    )
}

function CustomerTable() {
    return (
        <TableArea>
            <TableClip>
                <Table>
                    <colgroup>
                        {columns.map(([, w], i) => <col key={i} style={{ width: `${w / 18.85}%` }} />)}
                    </colgroup>
                    <thead>
                        <tr>{columns.map(([label, , left], i) => <HeadCell key={i} scope="col" $left={left}>{label}</HeadCell>)}</tr>
                    </thead>
                    <tbody>
                        {customers.map(([star, grade, mark, name, sex, ...fields], i) => (
                            <Row key={i} $bg={rowColor(i)}>
                                <Cell>{i + 1}</Cell>
                                <Cell $tight>{star > 0 && <FavoriteMark><Svg w={24}><Star /></Svg></FavoriteMark>}</Cell>
                                <Cell $tight><Badge $grade={grade}>{grade}</Badge></Cell>
                                <Cell $tight $left $bold $color={nameColors[grade]}>
                                    <NameBox $isNew={mark > 0}>
                                        {mark > 0 && <NewMark $faded={mark === 1}>N</NewMark>}
                                        {name}
                                    </NameBox>
                                </Cell>
                                <Cell $tight>{sex && <SexBox><SexIcon sex={sex} /></SexBox>}</Cell>
                                {fields.map((f, n) => (
                                    <Cell key={n} $left={n === 2 || n === 3} $color={fieldColors[n]}>{f}</Cell>
                                ))}
                            </Row>
                        ))}
                    </tbody>
                </Table>
            </TableClip>
            <ScrollBar>
                <svg width="12" height="12"><path d="M2 8l4-5 4 5" fill="none" stroke="#505050" strokeWidth="2" /></svg>
                <ScrollThumb />
                <svg width="12" height="8"><path d="M2 1l4 5 4-5" fill="none" stroke="#505050" strokeWidth="2" /></svg>
            </ScrollBar>
        </TableArea>
    )
}

function Footer() {
    return (
        <FooterBar>
            <Cluster $gap={2}>
                <ToolButton $w={107}>
                    <svg width="12" height="12"><path d="M1 0v12l10-6z" fill="#000" /></svg>
                    그룹별현황
                </ToolButton>
                <CountBox>검색 : 133건</CountBox>
            </Cluster>
            <Cluster $gap={3}>
                <CountBox $muted>전체 : 133건</CountBox>
                <FieldLabel htmlFor="sort">초기정렬 :</FieldLabel>
                <SelectBox>
                    <SortSelect id="sort" defaultValue="최근작업순"><option>최근작업순</option></SortSelect>
                    <SelectArrow><svg width="12" height="9"><path d="M1 2l5 5 5-5" fill="none" stroke="#505050" strokeWidth="1.500" /></svg></SelectArrow>
                </SelectBox>
                <ToolButton $w={99}>
                    <Svg w={20}><path d="M2 3h28L19 17v12l-6-4V17z" fill="#2c8cc4" stroke="#14609c" /><path d="M6 5h11l-3 11z" fill="#a4dcf4" /></Svg>
                    일괄삭제
                </ToolButton>
                <ToolButton $w={38} aria-label="전화">
                    <Svg w={20}>
                        <path d="M2 11Q2 3 16 3t14 8v3h-7v-4H9v4H2z" fill="#506c9c" stroke="#2c4474" />
                        <path d="M9 12h14l5 17H4z" fill="#6c88b4" stroke="#2c4474" />
                        <circle cx="16" cy="20" r="5.500" fill="#e4f0fc" stroke="#2c4474" strokeDasharray="2 1" />
                    </Svg>
                </ToolButton>
                <ToolButton $w={99}>
                    <Svg w={20}>
                        <rect x="8" y="2" width="16" height="12" fill="#fff" stroke="#8898a8" />
                        <rect x="2" y="10" width="28" height="13" rx="4" fill="#d8dce0" stroke="#8898a8" />
                        <rect x="9" y="10" width="14" height="7" fill="#1c9cc8" />
                        <path d="M8 20h16v10H8z" fill="#fff" stroke="#8898a8" /><path d="M11 25h10" stroke="#4ca8d8" strokeWidth="2" />
                    </Svg>
                    목록인쇄
                </ToolButton>
                <ToolButton $w={99}>
                    <Svg w={20}>
                        <path d="M4 2h16l6 6v22H4z" fill="#e4f2fe" stroke="#2c74bc" strokeWidth="2" />
                        <circle cx="24" cy="24" r="7" fill="#4c9c2c" /><path d="M24 20v8M20 24h8" stroke="#fff" strokeWidth="2.500" />
                    </Svg>
                    신규고객
                </ToolButton>
                <CloseGap />
                <ToolButton $w={99}>
                    <Svg w={18}><path d="M8 6l17 21M25 6L8 27" stroke="#e0402c" strokeWidth="7" /></Svg>
                    창 닫기
                </ToolButton>
            </Cluster>
        </FooterBar>
    )
}

function App() {
    return (
        <Desktop>
            <GlobalStyle />
            <AppWindow>
                <TopArea />
                <Frame>
                    <Pane>
                        <SearchPanel />
                        <CustomerTable />
                        <Footer />
                    </Pane>
                </Frame>
                <StatusBar>
                    <span>Ready</span>
                    <StatusKeys>
                        <span>CAP</span>
                        <span>NUM</span>
                        <span>SCRL</span>
                        <svg width="12" height="12" fill="#48608c"><path d="M9 0h2v2H9zM5 4h2v2H5zM9 4h2v2H9zM1 8h2v2H1zM5 8h2v2H5zM9 8h2v2H9z" /></svg>
                    </StatusKeys>
                </StatusBar>
                <Pointer width="14" height="21" viewBox="0 0 14 21" aria-hidden="true">
                    <path d="M1 1v16l4-4 3 7 2-1-3-7h6z" fill="#fff" stroke="#202020" />
                </Pointer>
            </AppWindow>
            <BuildNote>평가본입니다. Build 19013.vb_release.191025-1609</BuildNote>
        </Desktop>
    )
}

export default App
